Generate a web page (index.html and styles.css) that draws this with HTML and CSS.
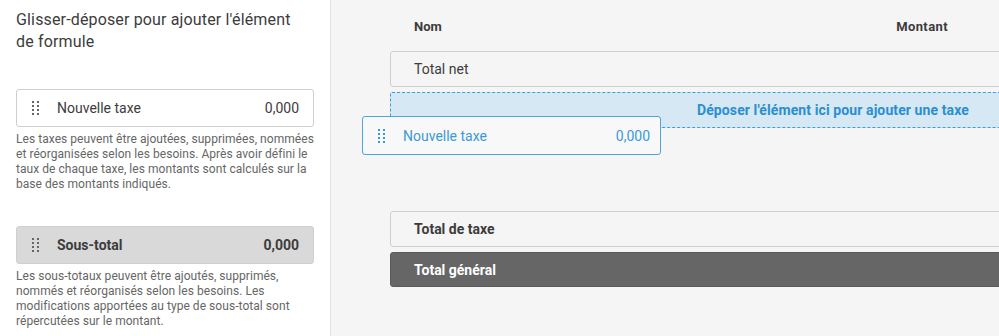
FILE: index.html
```html
<!DOCTYPE html>
<html lang="fr">

<head>
  <meta charset="UTF-8">
  <meta name="viewport" content="width=device-width, initial-scale=1.0">
  <title>Formule de taxe</title>
  <link rel="stylesheet" href="styles.css">
</head>

<body>

  <div class="layout">
    <div class="side">
      <h2 class="side-title">Glisser-déposer pour ajouter l'élément de formule</h2>

      <div class="item">
        <span class="grip"><i></i><i></i><i></i><i></i><i></i><i></i><i></i><i></i></span>
        <span class="item-name">Nouvelle taxe</span>
        <span class="item-value">0,000</span>
      </div>
      <p class="hint">Les taxes peuvent être ajoutées, supprimées, nommées et réorganisées selon les besoins. Après avoir défini le taux de chaque taxe, les montants sont calculés sur la base des montants indiqués.</p>

      <div class="item item-sub">
        <span class="grip"><i></i><i></i><i></i><i></i><i></i><i></i><i></i><i></i></span>
        <span class="item-name">Sous-total</span>
        <span class="item-value">0,000</span>
      </div>
      <p class="hint">Les sous-totaux peuvent être ajoutés, supprimés, nommés et réorganisés selon les besoins. Les modifications apportées au type de sous-total sont répercutées sur le montant.</p>
    </div>

    <div class="main">
      <div class="head">
        <span class="col-name">Nom</span>
        <span class="col-amount">Montant</span>
      </div>

      <div class="rows">
        <div class="row">Total net</div>
        <div class="drop">Déposer l'élément ici pour ajouter une taxe</div>

        <!-- élément en cours de glissement -->
        <div class="item item-drag">
          <span class="grip"><i></i><i></i><i></i><i></i><i></i><i></i><i></i><i></i></span>
          <span class="item-name">Nouvelle taxe</span>
          <span class="item-value">0,000</span>
        </div>

        <div class="row row-bold row-gap">Total de taxe</div>
        <div class="row row-total">Total général</div>
      </div>
    </div>
  </div>

</body>

</html>
```

FILE: styles.css
```css
* {
  box-sizing: border-box;
}

body {
  margin: 0;
  font-family: Roboto, "Noto Sans", sans-serif;
  color: #3c3c3c;
  background-color: #f5f5f5;
}

.layout {
  display: flex;
  height: 336px;
  overflow: hidden;
}

/* colonne de gauche */
.side {
  width: 331px;
  flex-shrink: 0;
  padding: 9px 16px 0 16px;
  background-color: #fff;
  border-right: 1px solid #e2e2e2;
}

.side-title {
  margin: 0 0 36px 0;
  font-size: 16px;
  font-weight: normal;
  line-height: 22px;
  padding-right: 20px;
  letter-spacing: 0.15px;
}

.item {
  display: flex;
  align-items: center;
  height: 38px;
  padding: 0 14px 0 15px;
  border: 1px solid #cfcfcf;
  border-radius: 3px;
  background-color: #fff;
  font-size: 14px;
}

.item-name {
  flex: 1;
  margin-left: 18px;
}

.item-sub {
  background-color: #d9d9d9;
  font-weight: bold;
}

.grip {
  display: grid;
  grid-template-columns: 2px 2px;
  column-gap: 3px;
  row-gap: 2px;
}

.grip i {
  display: block;
  width: 2px;
  height: 2px;
  background-color: #666;
}

.hint {
  margin: 5px 0 34px 0;
  font-size: 12px;
  line-height: 15px;
  color: #666;
  letter-spacing: 0.05px;
}

/* zone de droite */
.main {
  flex: 1;
  padding-left: 59px;
  min-width: 0;
}

.head {
  display: flex;
  width: 640px;
  padding: 17px 0 14px 24px;
  font-size: 13px;
  font-weight: bold;
  line-height: 20px;
}

.col-name {
  flex: 1;
}

.col-amount {
  margin-right: 82px;
  letter-spacing: 0.4px;
}

.rows {
  position: relative;
  width: 640px;
}

.row {
  display: flex;
  align-items: center;
  height: 36px;
  padding-left: 23px;
  margin-bottom: 5px;
  border: 1px solid #cfcfcf;
  border-radius: 3px;
  background-color: #f5f5f5;
  font-size: 14px;
}

.row-bold {
  font-weight: bold;
}

.row-gap {
  margin-top: 83px;
}

.row-total {
  height: 35px;
  border-color: #5a5a5a;
  background-color: #666;
  color: #fff;
  font-weight: bold;
}

.drop {
  display: flex;
  align-items: center;
  height: 36px;
  padding-left: 306px;
  border: 1px dashed #3d9fd8;
  border-radius: 2px;
  background-color: #d5e8f4;
  color: #2a8fd0;
  font-size: 14px;
  font-weight: bold;
  letter-spacing: 0.1px;
}

.item-drag {
  position: absolute;
  top: 65px;
  left: -28px;
  width: 299px;
  height: 39px;
  padding-right: 10px;
  border-color: #4aa6dc;
  background-color: #f8f8f8;
  color: #3a9ad6;
}

.item-drag .grip i {
  background-color: #3a9ad6;
}
```
